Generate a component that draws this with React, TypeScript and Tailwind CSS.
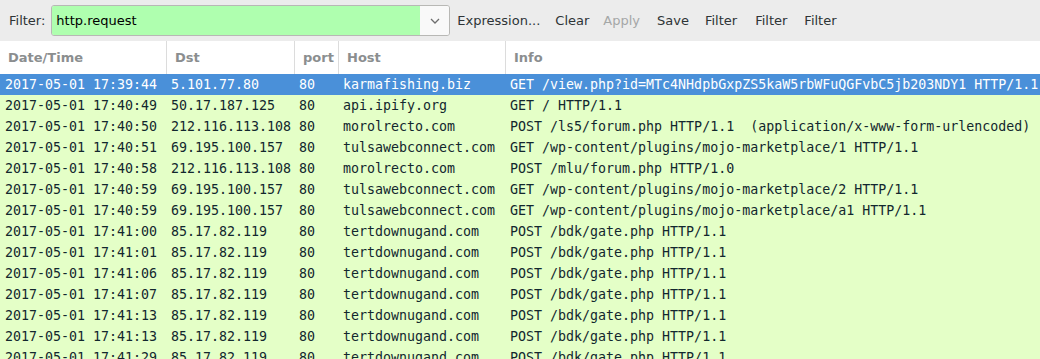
const rows = [
  ["2017-05-01 17:39:44", "5.101.77.80", "80", "karmafishing.biz", "GET /view.php?id=MTc4NHdpbGxpZS5kaW5rbWFuQGFvbC5jb203NDY1 HTTP/1.1"],
  ["2017-05-01 17:40:49", "50.17.187.125", "80", "api.ipify.org", "GET / HTTP/1.1"],
  ["2017-05-01 17:40:50", "212.116.113.108", "80", "morolrecto.com", "POST /ls5/forum.php HTTP/1.1  (application/x-www-form-urlencoded)"],
  ["2017-05-01 17:40:51", "69.195.100.157", "80", "tulsawebconnect.com", "GET /wp-content/plugins/mojo-marketplace/1 HTTP/1.1"],
  ["2017-05-01 17:40:58", "212.116.113.108", "80", "morolrecto.com", "POST /mlu/forum.php HTTP/1.0"],
  ["2017-05-01 17:40:59", "69.195.100.157", "80", "tulsawebconnect.com", "GET /wp-content/plugins/mojo-marketplace/2 HTTP/1.1"],
  ["2017-05-01 17:40:59", "69.195.100.157", "80", "tulsawebconnect.com", "GET /wp-content/plugins/mojo-marketplace/a1 HTTP/1.1"],
  ["2017-05-01 17:41:00", "85.17.82.119", "80", "tertdownugand.com", "POST /bdk/gate.php HTTP/1.1"],
  ["2017-05-01 17:41:01", "85.17.82.119", "80", "tertdownugand.com", "POST /bdk/gate.php HTTP/1.1"],
  ["2017-05-01 17:41:06", "85.17.82.119", "80", "tertdownugand.com", "POST /bdk/gate.php HTTP/1.1"],
  ["2017-05-01 17:41:07", "85.17.82.119", "80", "tertdownugand.com", "POST /bdk/gate.php HTTP/1.1"],
  ["2017-05-01 17:41:13", "85.17.82.119", "80", "tertdownugand.com", "POST /bdk/gate.php HTTP/1.1"],
  ["2017-05-01 17:41:13", "85.17.82.119", "80", "tertdownugand.com", "POST /bdk/gate.php HTTP/1.1"],
  ["2017-05-01 17:41:29", "85.17.82.119", "80", "tertdownugand.com", "POST /bdk/gate.php HTTP/1.1"],
];

const headers = ["Date/Time", "Dst", "port", "Host", "Info"];
const gridCols = "grid grid-cols-[166px_128px_44px_167px_1fr]";

export default function App() {
  return (
    <div className="w-[1040px] h-[359px] overflow-hidden bg-white font-['DejaVu_Sans',sans-serif]">
      {/* filter toolbar */}
      <div className="h-[41px] bg-[#ececec] flex items-center pl-[9px] text-[13px] text-[#2e3436]">
        <span className="mr-[6px]">Filter:</span>
        <div className="flex h-[31px] w-[399px] rounded-[3px] border border-[#b8b8b5] overflow-hidden">
          <div className="flex-1 bg-[#afffaf] flex items-center pl-[4px] text-black">http.request</div>
          <div className="w-[29px] bg-[#f9f9f9] flex items-center justify-center">
            <svg width="10" height="6" viewBox="0 0 10 6">
              <path d="M1 1 L5 5 L9 1" fill="none" stroke="#6e6e6e" strokeWidth="1.3" />
            </svg>
          </div>
        </div>
        <div className="flex ml-[-1px]">
          <span className="px-2">Expression...</span>
          <span className="px-[7px]">Clear</span>
          <span className="pl-[7px] pr-[9px] text-[#a5a7a7]">Apply</span>
          <span className="px-2">Save</span>
          <span className="pl-2 pr-[9px]">Filter</span>
          <span className="pl-[9px] pr-[9px]">Filter</span>
          <span className="px-2">Filter</span>
        </div>
      </div>

      {/* column headers */}
      <div className={`${gridCols} h-[33px] bg-white`}>
        {headers.map((h, i) => (
          <div
            key={h}
            className={`flex items-center pl-[8px] text-[13px] font-bold text-[#8b8e8f] ${i > 0 ? "border-l border-[#dcdcdc]" : ""}`}
          >
            {h}
          </div>
        ))}
      </div>

      {/* packet list */}
      <div className="font-['DejaVu_Sans_Mono',monospace] text-[13.3px]">
        {rows.map((r, i) => (
          <div
            key={i}
            className={`${gridCols} h-[21px] items-center whitespace-pre ${i === 0 ? "bg-[#4a90d9] text-white" : "bg-[#e4ffc7] text-[#12272e]"}`}
          >
            {r.map((c, j) => (
              <div key={j} className="pl-[5px] overflow-hidden">
                {c}
              </div>
            ))}
          </div>
        ))}
      </div>
    </div>
  );
}
